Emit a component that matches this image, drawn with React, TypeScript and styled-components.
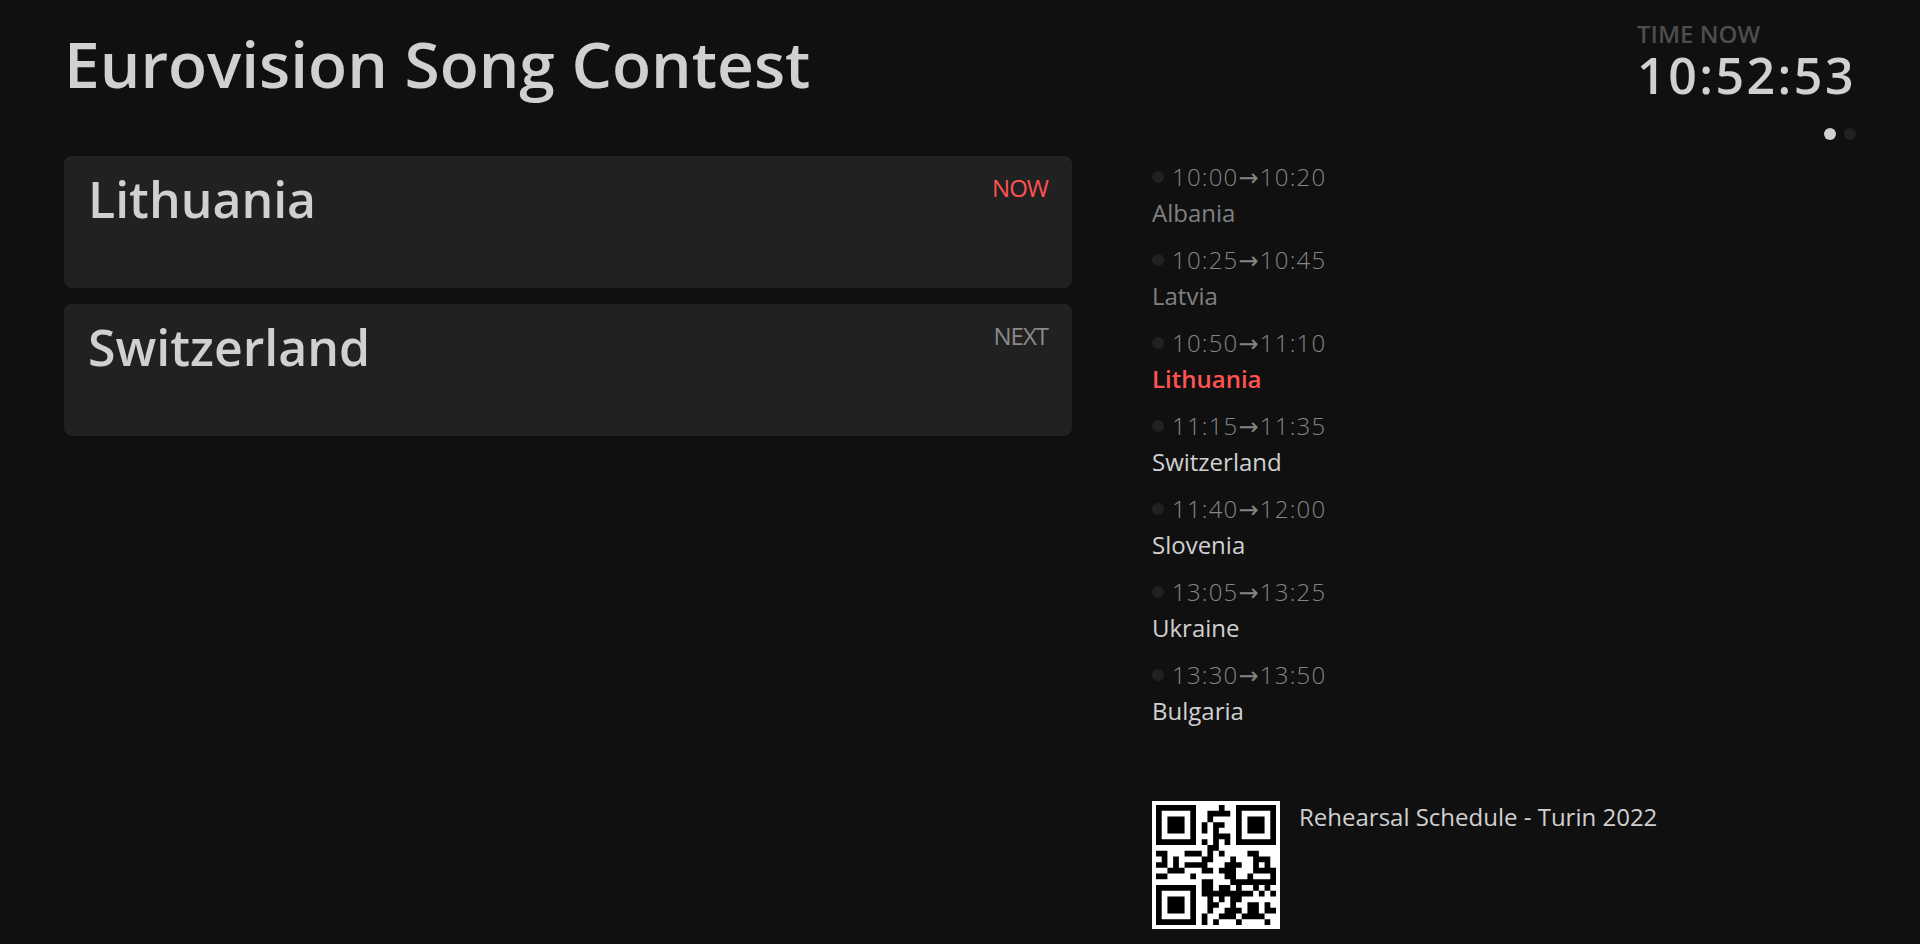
import React from "react";
import styled, { createGlobalStyle } from "styled-components";

const GlobalStyle = createGlobalStyle`
  *, *::before, *::after { box-sizing: border-box; }
  body {
    margin: 0;
    background: #101010;
    color: #d0d0d0;
    font-family: "Open Sans", "DejaVu Sans", sans-serif;
    font-size: 24px;
    line-height: 32px;
  }
  h1, h2, p, ul { margin: 0; padding: 0; }
`;

const Page = styled.div`
  min-height: 100vh;
  display: flex;
  flex-direction: column;
  padding: 16px 64px 15px;
`;

const Header = styled.header`
  display: flex;
  justify-content: space-between;
  height: 112px;
`;

const Title = styled.h1`
  font-size: 64px;
  line-height: 96px;
  font-weight: 600;
`;

const Clock = styled.div`
  padding-top: 2px;
`;

const ClockLabel = styled.p`
  color: #4d4d4d;
  font-weight: 600;
`;

const ClockTime = styled.time`
  display: block;
  font-size: 50px;
  line-height: 50px;
  font-weight: 600;
  letter-spacing: 0.05em;
`;

const Columns = styled.div`
  flex: 1;
  display: grid;
  grid-template-columns: 63fr 44fr;
  column-gap: 80px;
`;

const Cards = styled.main`
  display: flex;
  flex-direction: column;
  gap: 16px;
  padding-top: 28px;
`;

const Card = styled.section`
  display: flex;
  justify-content: space-between;
  min-height: 132px;
  padding: 8px 24px 16px;
  border-radius: 8px;
  background: #212121;
`;

const CardTitle = styled.h2`
  font-size: 50px;
  line-height: 70px;
  font-weight: 600;
`;

const CardTag = styled.span<{ $live?: boolean }>`
  padding-top: 8px;
  letter-spacing: -1px;
  color: ${(p) => (p.$live ? "#ff5353" : "#8a8a8a")};
`;

const Side = styled.aside`
  display: flex;
  flex-direction: column;
`;

const Pager = styled.div`
  display: flex;
  justify-content: flex-end;
  gap: 8px;
  height: 12px;
`;

const Dot = styled.span<{ $active?: boolean }>`
  flex: none;
  width: 12px;
  height: 12px;
  border-radius: 50%;
  background: ${(p) => (p.$active ? "#d0d0d0" : "#212121")};
`;

const Schedule = styled.ul`
  list-style: none;
  padding-top: 19px;
`;

type Status = "past" | "live" | "future";

const Entry = styled.li`
  padding-bottom: 11px;
`;

const EntryTime = styled.div`
  display: flex;
  align-items: center;
  gap: 8px;
  height: 36px;
  line-height: 36px;
  font-weight: 300;
  letter-spacing: 0.05em;
  color: #858585;
`;

const Arrow = styled.span`
  font-weight: 400;
`;

const entryColor = { past: "#808080", live: "#ff5353", future: "#d0d0d0" };

const EntryName = styled.p<{ $status: Status }>`
  line-height: 36px;
  font-weight: ${(p) => (p.$status === "live" ? 600 : 400)};
  color: ${(p) => entryColor[p.$status]};
`;

const Info = styled.footer`
  display: flex;
  gap: 19px;
  margin-top: auto;
`;

const QrCode = styled.svg`
  flex: none;
  width: 128px;
  height: 128px;
  padding: 4px;
  background: #ffffff;
`;

const entries: { start: string; end: string; name: string; status: Status }[] = [
  { start: "10:00", end: "10:20", name: "Albania", status: "past" },
  { start: "10:25", end: "10:45", name: "Latvia", status: "past" },
  { start: "10:50", end: "11:10", name: "Lithuania", status: "live" },
  { start: "11:15", end: "11:35", name: "Switzerland", status: "future" },
  { start: "11:40", end: "12:00", name: "Slovenia", status: "future" },
  { start: "13:05", end: "13:25", name: "Ukraine", status: "future" },
  { start: "13:30", end: "13:50", name: "Bulgaria", status: "future" },
];

const qrRows = [
  "#######....#..#######",
  "#.....#..####.#.....#",
  "#.###.#..#....#.###.#",
  "#.###.#.#.##..#.###.#",
  "#.###.#.#.#...#.###.#",
  "#.....#...###.#.....#",
  "#######.#.#.#.#######",
  ".........##..........",
  "##...###.#.#....##...",
  ".#.#....##...#...###.",
  "##.#.####...###..#.#.",
  "..###...##.###...####",
  "##....#.....##..#...#",
  "........##...########",
  "#######.##.##.#..#.#.",
  "#.....#.#########.#.#",
  "#.###.#..#.#.##......",
  "#.###.#..##..#..##.#.",
  "#.###.#..#..###.##.##",
  "#.....#.#..###.####..",
  "#######.#.#...#....#.",
];

// One horizontal run of dark modules per path segment.
const qrPath = qrRows
  .map((row, y) =>
    Array.from(row.matchAll(/#+/g))
      .map((m) => `M${m.index} ${y}h${m[0].length}v1h-${m[0].length}z`)
      .join("")
  )
  .join("");

export default function App() {
  return (
    <>
      <GlobalStyle />
      <Page>
        <Header>
          <Title>Eurovision Song Contest</Title>
          <Clock>
            <ClockLabel>TIME NOW</ClockLabel>
            <ClockTime>10:52:53</ClockTime>
          </Clock>
        </Header>
        <Columns>
          <Cards>
            <Card>
              <CardTitle>Lithuania</CardTitle>
              <CardTag $live>NOW</CardTag>
            </Card>
            <Card>
              <CardTitle>Switzerland</CardTitle>
              <CardTag>NEXT</CardTag>
            </Card>
          </Cards>
          <Side>
            <Pager>
              <Dot $active />
              <Dot />
            </Pager>
            <Schedule>
              {entries.map((e) => (
                <Entry key={e.start}>
                  <EntryTime>
                    <Dot />
                    <span>
                      {e.start}
                      <Arrow>→</Arrow>
                      {e.end}
                    </span>
                  </EntryTime>
                  <EntryName $status={e.status}>{e.name}</EntryName>
                </Entry>
              ))}
            </Schedule>
            <Info>
              <QrCode viewBox="0 0 21 21" role="img" aria-label="QR code">
                <path d={qrPath} fill="#000000" />
              </QrCode>
              <p>Rehearsal Schedule - Turin 2022</p>
            </Info>
          </Side>
        </Columns>
      </Page>
    </>
  );
}
